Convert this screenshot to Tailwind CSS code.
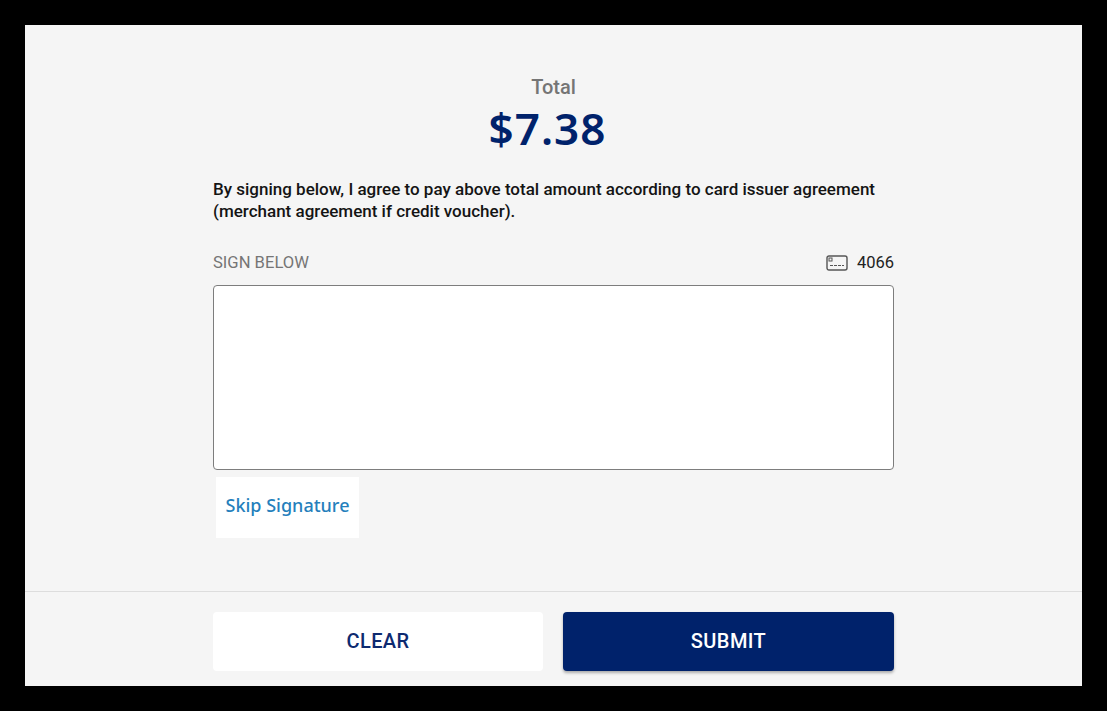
<!DOCTYPE html>
<html lang="en">
<head>
  <meta charset="UTF-8">
  <meta name="viewport" content="width=device-width, initial-scale=1.0">
  <title>Signature</title>
  <script src="https://cdn.jsdelivr.net/npm/@tailwindcss/browser@4"></script>
</head>
<body class="bg-black h-[711px] overflow-hidden font-['Roboto',sans-serif]">
  <div class="mx-[25px] pt-[25px]">
    <div class="bg-[#f5f5f5] h-[661px] flex flex-col">
      <div class="w-[681px] mx-auto h-[566px] pt-[50px]">
        <p class="text-center text-[20px] leading-[24px] text-[#757575] font-medium">Total</p>
        <p class="mt-[1px] text-center text-[44px] leading-[56px] pr-[12px] tracking-[1px] font-semibold text-[#00226b] font-['Noto_Sans',sans-serif]">$7.38</p>
        <p class="mt-[22px] text-[17px] leading-[22px] font-medium text-[#141414]">By signing below, I agree to pay above total amount according to card issuer agreement (merchant agreement if credit voucher).</p>
        <div class="mt-[30px] flex items-center justify-between h-[22px]">
          <span class="text-[16.6px] text-[#757575]">SIGN BELOW</span>
          <span class="flex items-center gap-[9px] text-[16.5px] text-[#222222]">
            <svg class="w-[22px] h-[16px] -mt-[1px]" viewBox="0 0 22 16" fill="none" stroke="#555555">
              <rect x="1" y="1" width="20" height="14" rx="2" stroke-width="1.4"/>
              <rect x="3" y="3" width="3" height="3" stroke-width="1"/>
              <path d="M4 10.5h14" stroke-width="1.2" stroke-dasharray="3 1"/>
            </svg>
            4066
          </span>
        </div>
        <div class="mt-[11px] h-[185px] bg-white border border-[#7d7d7d] rounded-[4px]"></div>
        <div class="mt-[7px] ml-[3px] w-[143px] h-[61px] pb-[5px] bg-white flex items-center justify-center text-[18px] font-medium text-[#257fbc] font-['Noto_Sans',sans-serif]">Skip Signature</div>
      </div>
      <div class="border-t border-[#dddddd] flex-1">
        <div class="w-[681px] mx-auto pt-[20px] flex gap-[20px]">
          <button class="w-[330px] h-[59px] pb-[2px] bg-white rounded-[4px] text-[20px] tracking-[0.4px] font-medium text-[#0d2a70]">CLEAR</button>
          <button class="w-[331px] h-[59px] pb-[2px] bg-[#00226b] rounded-[4px] text-[20px] tracking-[0.4px] font-medium text-white shadow-[0_2px_3px_rgba(0,0,0,0.3)]">SUBMIT</button>
        </div>
      </div>
    </div>
  </div>
</body>
</html>
